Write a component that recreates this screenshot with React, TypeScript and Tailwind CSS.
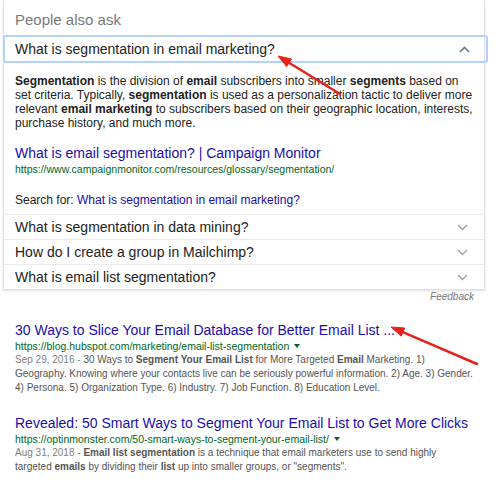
import React from "react";

function ChevronDown() {
  return (
    <svg width="11" height="7" viewBox="0 0 11 7" fill="none">
      <path d="M1 1l4.5 4.5L10 1" stroke="#9aa0a6" strokeWidth="1.4" />
    </svg>
  );
}

function ChevronUp() {
  return (
    <svg width="11" height="7" viewBox="0 0 11 7" fill="none">
      <path d="M1 6l4.5-4.5L10 6" stroke="#70757a" strokeWidth="1.6" />
    </svg>
  );
}

function Caret() {
  return (
    <svg width="6" height="4" viewBox="0 0 6 4" className="ml-[5px] inline-block align-middle">
      <path d="M0 0h6L3 4z" fill="#006621" />
    </svg>
  );
}

function Row({ q }: { q: string }) {
  return (
    <div className="flex h-[25px] items-center justify-between border-t border-[#ebebeb] pl-[11px] pr-[16px]">
      <span className="text-[14px] leading-[18px] text-[#222]">{q}</span>
      <ChevronDown />
    </div>
  );
}

export default function App() {
  return (
    <div className="relative h-[481px] w-[500px] overflow-hidden bg-white font-['Liberation_Sans',Arial,sans-serif]">
      <div className="ml-[3px] w-[482px] border-x border-b border-[#dfe1e5] shadow-[0_1px_2px_rgba(0,0,0,0.12)]">
        <div className="h-[35px] pl-[11px] pt-[11px] text-[15px] leading-[18px] text-[#777]">
          People also ask
        </div>
        <div className="-ml-[1px] -mr-[4px] flex h-[28px] items-center justify-between rounded-[3px] border-2 border-[#b3d1fa] pl-[10px] pr-[16px]">
          <span className="text-[14px] leading-[18px] text-[#222]">What is segmentation in email marketing?</span>
          <ChevronUp />
        </div>
        <div className="pb-[7px] pl-[11px] pt-[11px]">
          <p className="whitespace-nowrap text-[12px] leading-[14px] text-[#222]">
            <b>Segmentation</b> is the division of <b>email</b> subscribers into smaller <b>segments</b> based on
            <br />
            set criteria. Typically, <b>segmentation</b> is used as a personalization tactic to deliver more
            <br />
            relevant <b>email marketing</b> to subscribers based on their geographic location, interests,
            <br />
            purchase history, and much more.
          </p>
          <div className="mt-[14px] text-[14px] leading-[18px] text-[#1a0dab]">
            What is email segmentation? | Campaign Monitor
          </div>
          <div className="text-[10.5px] leading-[14px] text-[#006621]">
            https://www.campaignmonitor.com/resources/glossary/segmentation/
          </div>
          <div className="mt-[17px] text-[12px] leading-[14px] text-[#222]">
            Search for: <span className="text-[#1a0dab]">What is segmentation in email marketing?</span>
          </div>
        </div>
        <Row q="What is segmentation in data mining?" />
        <Row q="How do I create a group in Mailchimp?" />
        <Row q="What is email list segmentation?" />
      </div>
      <div className="mt-[1px] w-[485px] pr-[11px] text-right text-[10px] italic leading-[12px] text-[#777]">
        Feedback
      </div>

      <div className="mt-[18px] pl-[15px]">
        <div className="text-[14px] leading-[18px] text-[#1a0dab]">
          30 Ways to Slice Your Email Database for Better Email List ...
        </div>
        <div className="flex items-center text-[10.5px] leading-[14px] text-[#006621]">
          https://blog.hubspot.com/marketing/email-list-segmentation
          <Caret />
        </div>
        <p className="whitespace-nowrap text-[10px] leading-[14px] text-[#545454]">
          <span className="text-[#808080]">Sep 29, 2016 - </span>30 Ways to <b>Segment Your Email List</b> for More Targeted <b>Email</b> Marketing. 1)
          <br />
          Geography. Knowing where your contacts live can be seriously powerful information. 2) Age. 3) Gender.
          <br />
          4) Persona. 5) Organization Type. 6) Industry. 7) Job Function. 8) Education Level.
        </p>
      </div>

      <div className="mt-[19px] pl-[15px]">
        <div className="text-[14px] leading-[18px] text-[#1a0dab]">
          Revealed: 50 Smart Ways to Segment Your Email List to Get More Clicks
        </div>
        <div className="flex items-center text-[10.5px] leading-[14px] text-[#006621]">
          https://optinmonster.com/50-smart-ways-to-segment-your-email-list/
          <Caret />
        </div>
        <p className="whitespace-nowrap text-[10px] leading-[14px] text-[#545454]">
          <span className="text-[#808080]">Aug 31, 2018 - </span><b>Email list segmentation</b> is a technique that email marketers use to send highly
          <br />
          targeted <b>emails</b> by dividing their <b>list</b> up into smaller groups, or "segments".
        </p>
      </div>

      <svg className="pointer-events-none absolute left-0 top-0" width="500" height="481" viewBox="0 0 500 481">
        <line x1="289" y1="62.8" x2="340" y2="94" stroke="#e5231c" strokeWidth="2.5" strokeLinecap="round" />
        <path d="M278 56L286.7 66.6L291.5 59Z" fill="#e5231c" stroke="#e5231c" strokeWidth="1" strokeLinejoin="round" />
        <line x1="402.9" y1="332.1" x2="477" y2="364" stroke="#e5231c" strokeWidth="2.5" strokeLinecap="round" />
        <path d="M391 327L401.2 336.2L404.7 328Z" fill="#e5231c" stroke="#e5231c" strokeWidth="1" strokeLinejoin="round" />
      </svg>
    </div>
  );
}
